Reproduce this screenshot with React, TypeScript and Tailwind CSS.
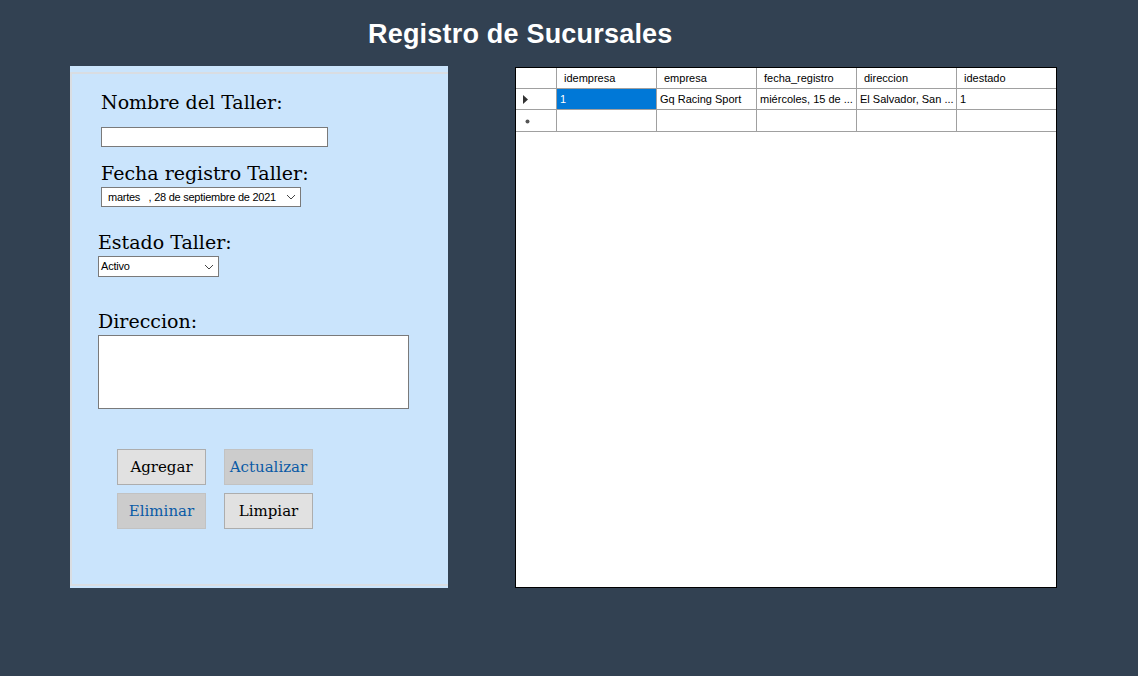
import React from "react";

const serif = { fontFamily: '"DejaVu Serif", "Liberation Serif", serif' };

function Chevron() {
  return (
    <svg width="10" height="6" viewBox="0 0 10 6" className="shrink-0">
      <path d="M1 1 L5 5 L9 1" fill="none" stroke="#444" strokeWidth="1" />
    </svg>
  );
}

function Btn({ label, dim }: { label: string; dim?: boolean }) {
  return (
    <div
      className={
        "w-[89px] h-[36px] border flex items-center justify-center text-[15px] " +
        (dim
          ? "bg-[#cccccc] border-[#c2c2c2] text-[#0a5aa6]"
          : "bg-[#e1e1e1] border-[#adadad] text-black")
      }
      style={serif}
    >
      {label}
    </div>
  );
}

const cols = ["idempresa", "empresa", "fecha_registro", "direccion", "idestado"];
const row = ["1", "Gq Racing Sport", "miércoles, 15 de ...", "El Salvador, San ...", "1"];

export default function App() {
  return (
    <div
      className="w-[1138px] h-[676px] bg-[#324152] overflow-hidden"
      style={{ fontFamily: '"Liberation Sans", Arial, sans-serif' }}
    >
      <div className="h-[66px] flex items-center pl-[368px] pt-[2px]">
        <span className="text-white font-bold text-[27px] leading-none tracking-[0.2px]">
          Registro de Sucursales
        </span>
      </div>
      <div className="flex items-start pl-[70px]">
        {/* Left panel */}
        <div className="w-[378px] h-[522px] bg-[#cae4fc] pt-[6px]">
          <div className="h-[514px] border-t-2 border-b-2 border-l-2 border-[#d9dde2] flex flex-col items-start">
            <div className="ml-[29px] mt-[17px] text-[19px] leading-[22px] text-black" style={serif}>
              Nombre del Taller:
            </div>
            <div className="ml-[29px] mt-[14px] w-[227px] h-[20px] bg-white border border-[#7a7a7a]" />
            <div className="ml-[29px] mt-[15px] text-[19px] leading-[22px] text-black" style={serif}>
              Fecha registro Taller:
            </div>
            <div className="ml-[29px] mt-[3px] w-[200px] h-[20px] bg-white border border-[#7a7a7a] flex items-center pl-[6px] pr-[4px] justify-between">
              <span className="text-[11px] tracking-[-0.25px] text-black whitespace-pre leading-none">
                martes   , 28 de septiembre de 2021
              </span>
              <Chevron />
            </div>
            <div className="ml-[26px] mt-[24px] text-[19px] leading-[22px] text-black" style={serif}>
              Estado Taller:
            </div>
            <div className="ml-[26px] mt-[3px] w-[121px] h-[21px] bg-white border border-[#7a7a7a] flex items-center pl-[2px] pr-[4px] justify-between">
              <span className="text-[11px] tracking-[-0.2px] text-black leading-none">Activo</span>
              <Chevron />
            </div>
            <div className="ml-[26px] mt-[33px] text-[19px] leading-[22px] text-black" style={serif}>
              Direccion:
            </div>
            <div className="ml-[26px] mt-[3px] w-[311px] h-[74px] bg-white border border-[#7a7a7a]" />
            <div className="ml-[45px] mt-[40px] grid grid-cols-[89px_89px] gap-x-[18px] gap-y-[8px]">
              <Btn label="Agregar" />
              <Btn label="Actualizar" dim />
              <Btn label="Eliminar" dim />
              <Btn label="Limpiar" />
            </div>
          </div>
        </div>

        {/* Grid */}
        <div className="ml-[67px] mt-[1px] w-[542px] h-[521px] bg-white border border-black text-[11px] text-black">
          <div className="flex h-[21px] border-b border-[#a0a0a0]">
            <div className="w-[41px] shrink-0 border-r border-[#a0a0a0]" />
            {cols.map((c, i) => (
              <div
                key={c}
                className={
                  "flex items-center pl-[7px] " +
                  (i < 4 ? "w-[100px] shrink-0 border-r border-[#a0a0a0]" : "flex-1")
                }
              >
                {c}
              </div>
            ))}
          </div>
          <div className="flex h-[21px] border-b border-[#a0a0a0]">
            <div className="w-[41px] shrink-0 border-r border-[#a0a0a0] flex items-center pl-[7px]">
              <svg width="5" height="9" viewBox="0 0 5 9">
                <path d="M0 0 L5 4.5 L0 9 Z" fill="#333" />
              </svg>
            </div>
            {row.map((c, i) => (
              <div
                key={i}
                className={
                  "flex items-center pl-[3px] whitespace-nowrap overflow-hidden " +
                  (i === 0 ? "bg-[#0078d7] text-white " : "") +
                  (i < 4 ? "w-[100px] shrink-0 border-r border-[#a0a0a0]" : "flex-1")
                }
              >
                {c}
              </div>
            ))}
          </div>
          <div className="flex h-[22px] border-b border-[#a0a0a0]">
            <div className="w-[41px] shrink-0 border-r border-[#a0a0a0] flex items-center pl-[9px] pt-[2px]">
              <svg width="5" height="5" viewBox="0 0 5 5">
                <circle cx="2.5" cy="2.5" r="2" fill="#555" />
              </svg>
            </div>
            {row.map((_, i) => (
              <div
                key={i}
                className={i < 4 ? "w-[100px] shrink-0 border-r border-[#a0a0a0]" : "flex-1"}
              />
            ))}
          </div>
        </div>
      </div>
    </div>
  );
}
